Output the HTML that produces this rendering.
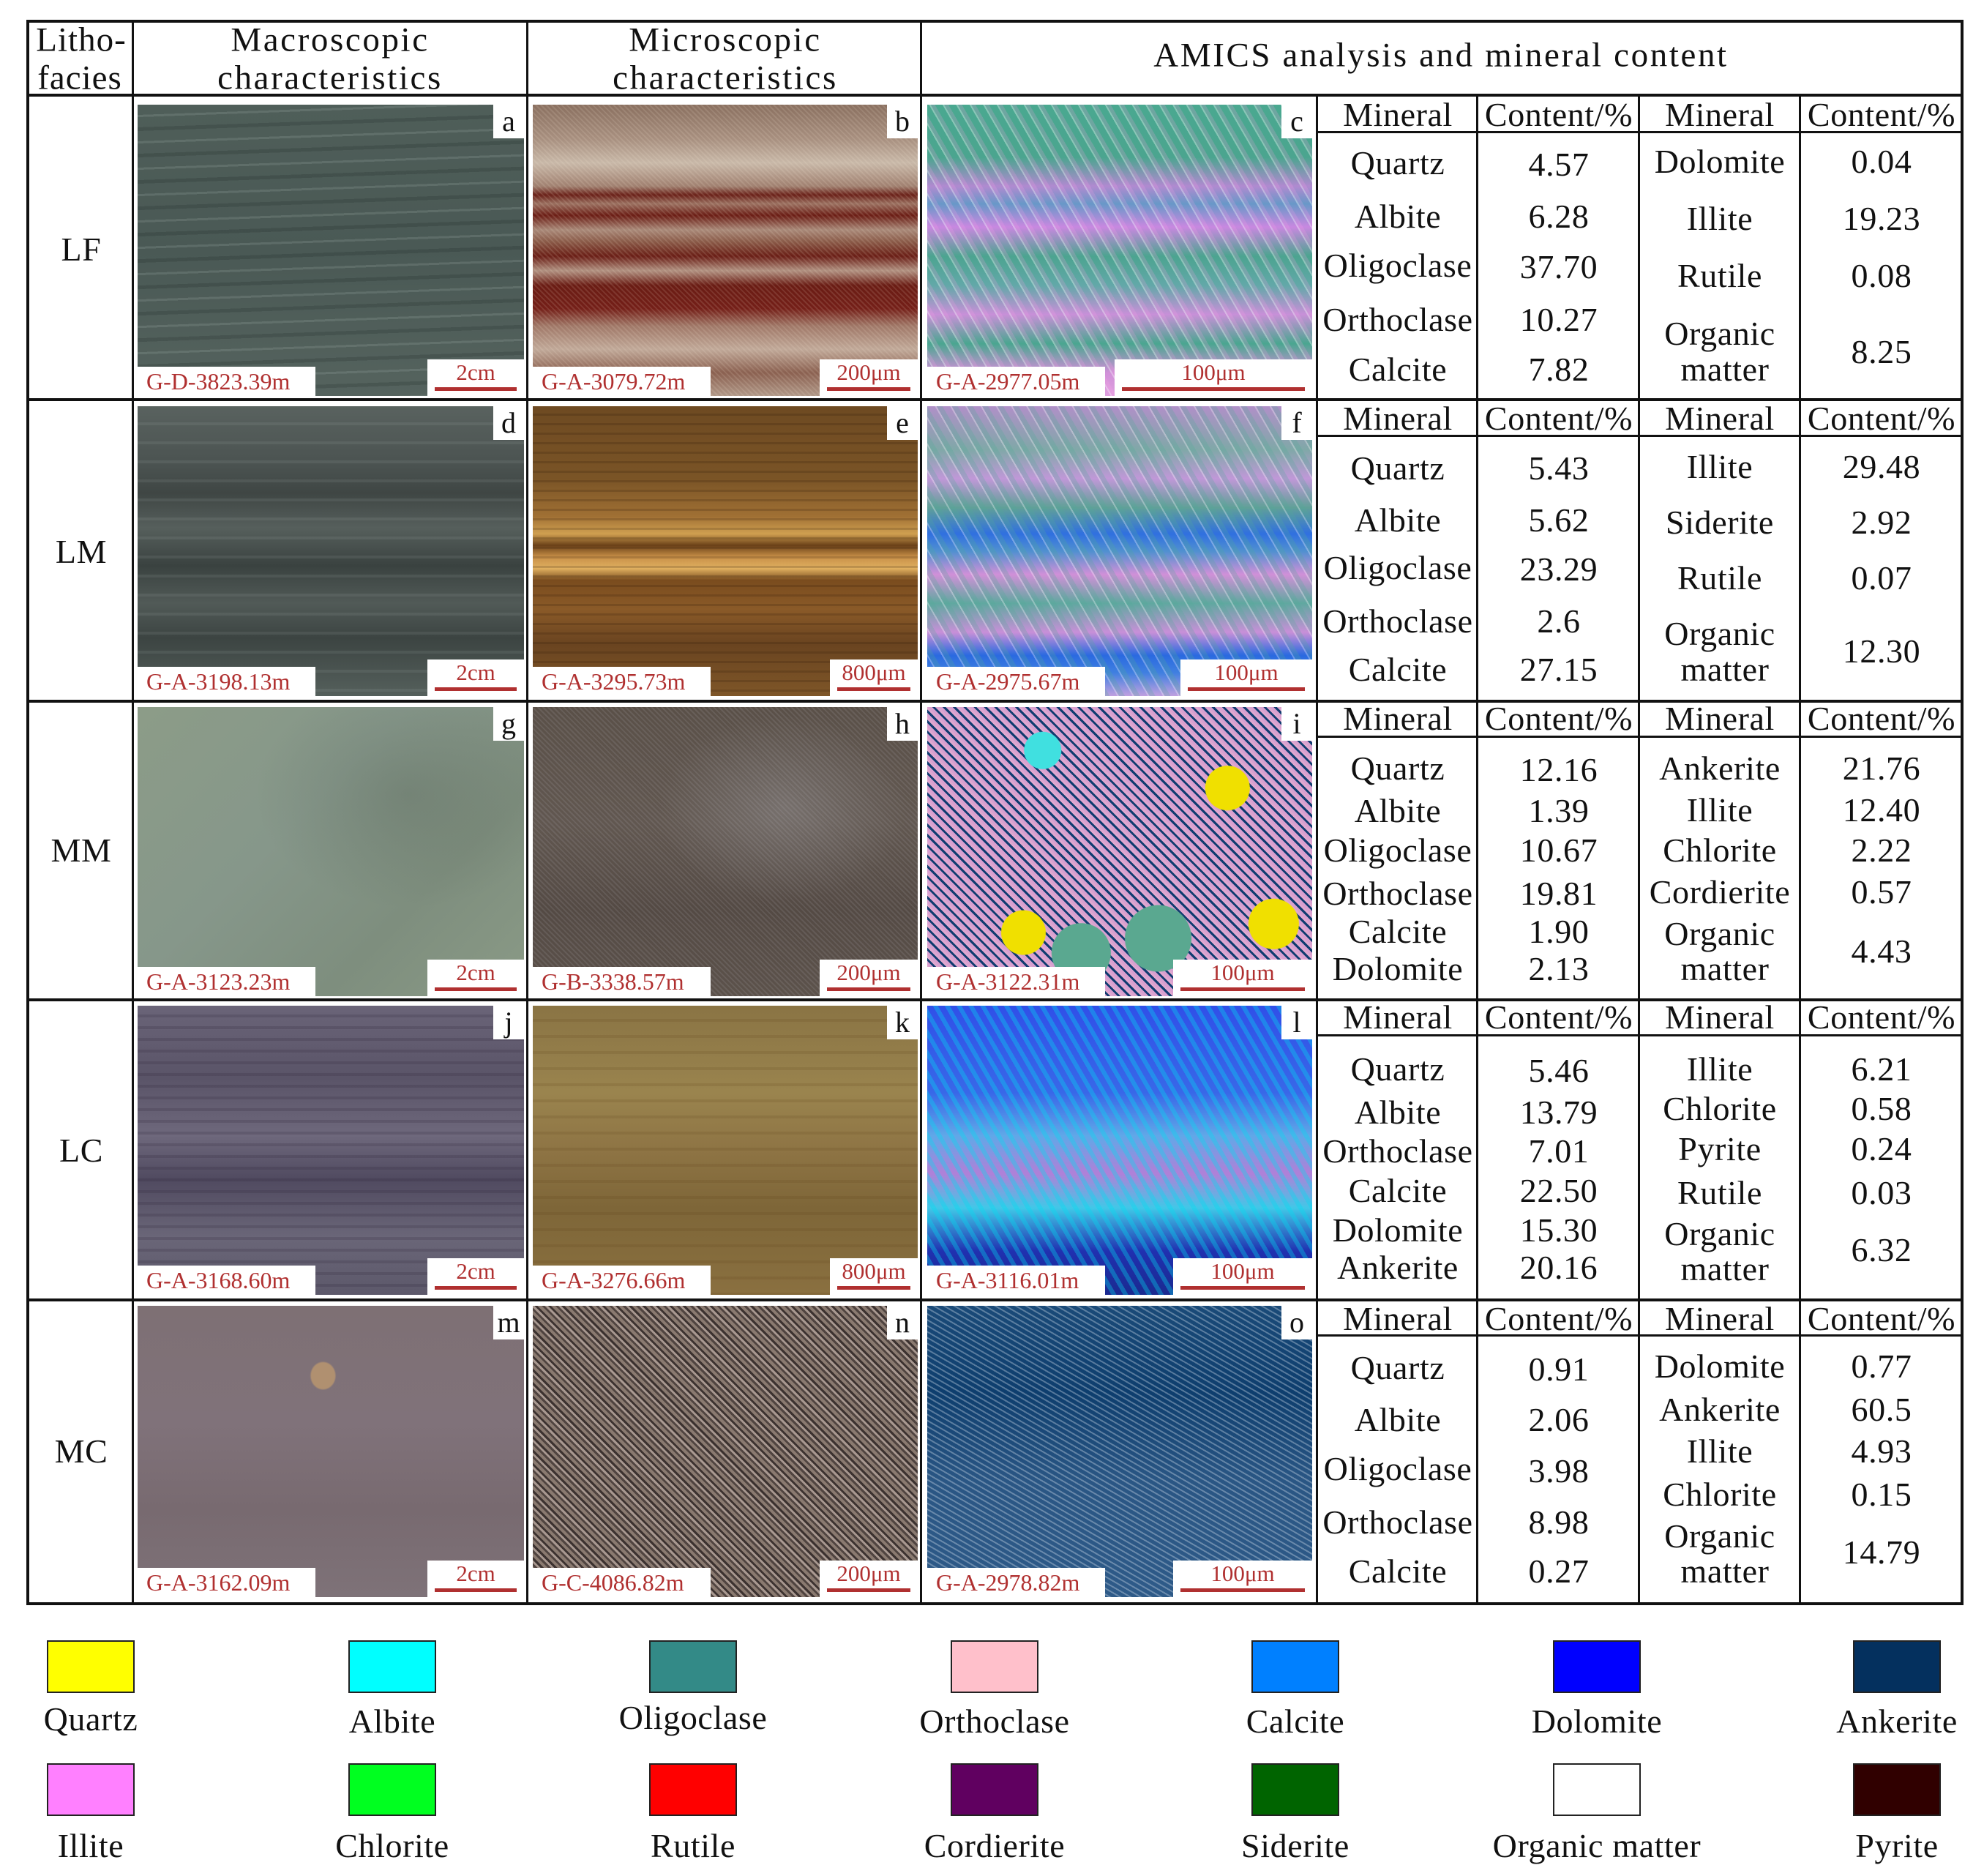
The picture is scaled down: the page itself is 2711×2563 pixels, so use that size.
<!DOCTYPE html>
<html><head><meta charset="utf-8">
<style>
body{margin:0;background:#fff;}
#p{position:relative;width:2711px;height:2563px;background:#fff;overflow:hidden;font-family:"Liberation Serif",serif;color:#111;}
.h,.v{position:absolute;background:#111;}
.t{position:absolute;transform:translate(-50%,-50%);white-space:nowrap;font-size:46px;line-height:1;letter-spacing:0.6px;}
.hd{font-size:47px;letter-spacing:2.6px;}
.im{position:absolute;overflow:hidden;}
.lab{position:absolute;background:#fff;color:#b03030;font-size:32px;line-height:40px;padding:0 0 0 12px;bottom:0;left:0;height:40px;box-sizing:border-box;white-space:nowrap;width:243px;}
.sc{position:absolute;background:#fff;color:#b03030;font-size:31px;line-height:36px;text-align:center;bottom:0;right:0;height:50px;white-space:nowrap;}
.sc i{position:absolute;left:10px;right:10px;bottom:7px;height:5px;background:#b03030;}
.let{position:absolute;top:0;right:0;width:42px;height:46px;background:#fff;font-size:40px;line-height:46px;text-align:center;}
.sw{position:absolute;width:120px;height:72px;border:2px solid #222;box-sizing:border-box;}
</style></head><body><div id="p">

<div class="h" style="left:38px;top:27px;width:2645px;height:4px"></div>
<div class="h" style="left:38px;top:128px;width:2645px;height:4px"></div>
<div class="h" style="left:38px;top:544px;width:2645px;height:4px"></div>
<div class="h" style="left:38px;top:956px;width:2645px;height:4px"></div>
<div class="h" style="left:38px;top:1364px;width:2645px;height:4px"></div>
<div class="h" style="left:38px;top:1774px;width:2645px;height:4px"></div>
<div class="h" style="left:38px;top:2189px;width:2645px;height:4px"></div>
<div class="h" style="left:1800px;top:179px;width:881px;height:3px"></div>
<div class="h" style="left:1800px;top:594px;width:881px;height:3px"></div>
<div class="h" style="left:1800px;top:1005px;width:881px;height:3px"></div>
<div class="h" style="left:1800px;top:1413px;width:881px;height:3px"></div>
<div class="h" style="left:1800px;top:1823px;width:881px;height:3px"></div>
<div class="v" style="left:36px;top:27px;width:4px;height:2166px"></div>
<div class="v" style="left:180px;top:27px;width:3px;height:2166px"></div>
<div class="v" style="left:719px;top:27px;width:3px;height:2166px"></div>
<div class="v" style="left:1257px;top:27px;width:3px;height:2166px"></div>
<div class="v" style="left:2679px;top:27px;width:4px;height:2166px"></div>
<div class="v" style="left:1798px;top:130px;width:3px;height:2063px"></div>
<div class="v" style="left:2017px;top:130px;width:3px;height:2063px"></div>
<div class="v" style="left:2238px;top:130px;width:3px;height:2063px"></div>
<div class="v" style="left:2458px;top:130px;width:3px;height:2063px"></div>

<div class="t hd" style="left:111px;top:55px;letter-spacing:1px">Litho-</div>
<div class="t hd" style="left:109px;top:107px;letter-spacing:1px">facies</div>
<div class="t hd" style="left:451px;top:55px">Macroscopic</div>
<div class="t hd" style="left:451px;top:107px">characteristics</div>
<div class="t hd" style="left:991px;top:55px">Microscopic</div>
<div class="t hd" style="left:991px;top:107px">characteristics</div>
<div class="t hd" style="left:1969px;top:76px">AMICS analysis and mineral content</div>

<div class="t" style="left:111px;top:341px">LF</div>
<div class="t" style="left:111px;top:754px">LM</div>
<div class="t" style="left:111px;top:1162px">MM</div>
<div class="t" style="left:111px;top:1572px">LC</div>
<div class="t" style="left:111px;top:1983px">MC</div>

<!-- Row 1 images -->
<div class="im" style="left:188px;top:143px;width:528px;height:398px;background:repeating-linear-gradient(178deg,rgba(0,0,0,0) 0 14px,rgba(190,205,200,.16) 14px 17px,rgba(0,0,0,0) 17px 31px,rgba(20,30,28,.18) 31px 36px),linear-gradient(180deg,#4f5e59,#4a5955 50%,#55635e);">
<div class="let">a</div><div class="lab">G-D-3823.39m</div><div class="sc" style="width:132px">2cm<i></i></div></div>
<div class="im" style="left:728px;top:143px;width:526px;height:398px;background:repeating-linear-gradient(45deg,rgba(255,255,255,0) 0 3px,rgba(255,240,220,.12) 3px 5px),linear-gradient(180deg,#8a7060 0,#a89080 12%,#c8b8a8 20%,#a08070 28%,#6a2018 31%,#9a7060 34%,#6b1d15 38%,#a88878 43%,#8a5a48 47%,#6a1e16 52%,#b09080 57%,#6a1c14 62%,#741f18 70%,#a07868 76%,#c0a898 84%,#8a6050 92%,#b09888 100%);">
<div class="let">b</div><div class="lab">G-A-3079.72m</div><div class="sc" style="width:134px">200μm<i></i></div></div>
<div class="im" style="left:1267px;top:143px;width:526px;height:398px;background:repeating-linear-gradient(60deg,rgba(255,255,255,0) 0 9px,rgba(255,255,255,.35) 9px 11px,rgba(255,160,230,.2) 11px 16px),linear-gradient(180deg,#4aa890 0,#4ba58f 18%,#b08ad0 28%,#6898c8 34%,#c888e0 42%,#4ca490 52%,#62a8a8 62%,#c890d8 72%,#4aa690 82%,#d090d8 92%,#e0a0e0 100%);">
<div class="let">c</div><div class="lab">G-A-2977.05m</div><div class="sc" style="width:270px">100μm<i></i></div></div>

<!-- Row 2 images -->
<div class="im" style="left:188px;top:555px;width:528px;height:396px;background:repeating-linear-gradient(180deg,rgba(0,0,0,0) 0 22px,rgba(170,180,178,.12) 22px 26px),linear-gradient(180deg,#59625f 0,#4b5351 20%,#3f4644 30%,#565f5c 42%,#3a4240 55%,#515a57 68%,#3c4442 80%,#55605c 100%);">
<div class="let">d</div><div class="lab">G-A-3198.13m</div><div class="sc" style="width:132px">2cm<i></i></div></div>
<div class="im" style="left:728px;top:555px;width:526px;height:396px;background:repeating-linear-gradient(180deg,rgba(0,0,0,0) 0 10px,rgba(40,20,5,.18) 10px 13px),linear-gradient(180deg,#6e4a22 0,#7a5426 25%,#a07034 38%,#d0a050 44%,#6a4018 48%,#c89048 52%,#e0b060 56%,#7a4c1e 60%,#8a5a28 70%,#6a4420 82%,#7e5628 100%);">
<div class="let">e</div><div class="lab">G-A-3295.73m</div><div class="sc" style="width:120px">800μm<i></i></div></div>
<div class="im" style="left:1267px;top:555px;width:526px;height:396px;background:repeating-linear-gradient(60deg,rgba(255,255,255,0) 0 9px,rgba(255,255,255,.3) 9px 11px,rgba(80,170,150,.25) 11px 18px),linear-gradient(180deg,#b090c8 0,#80a8a8 15%,#c098d8 25%,#60a098 35%,#3070e0 44%,#5090d0 50%,#d090d8 58%,#60a8a0 68%,#c890d8 78%,#2a6ae0 86%,#4080e0 92%,#c0a0e0 100%);">
<div class="let">f</div><div class="lab">G-A-2975.67m</div><div class="sc" style="width:180px">100μm<i></i></div></div>

<!-- Row 3 images -->
<div class="im" style="left:188px;top:966px;width:528px;height:395px;background:radial-gradient(ellipse at 70% 30%,rgba(60,70,60,.2),rgba(0,0,0,0) 40%),linear-gradient(135deg,#8c9c88,#86978a 40%,#7e8e7e 70%,#8a9a86);">
<div class="let">g</div><div class="lab">G-A-3123.23m</div><div class="sc" style="width:132px">2cm<i></i></div></div>
<div class="im" style="left:728px;top:966px;width:526px;height:395px;background:repeating-linear-gradient(45deg,rgba(255,255,255,0) 0 3px,rgba(200,200,210,.12) 3px 5px),radial-gradient(ellipse at 65% 35%,rgba(170,170,175,.3),rgba(0,0,0,0) 35%),linear-gradient(180deg,#5a5048,#615750 40%,#544a44 70%,#5c524b);">
<div class="let">h</div><div class="lab">G-B-3338.57m</div><div class="sc" style="width:134px">200μm<i></i></div></div>
<div class="im" style="left:1267px;top:966px;width:526px;height:395px;background:radial-gradient(circle at 78% 28%,#f0e000 0 30px,rgba(0,0,0,0) 31px),radial-gradient(circle at 90% 75%,#f0e000 0 34px,rgba(0,0,0,0) 35px),radial-gradient(circle at 25% 78%,#f0e000 0 30px,rgba(0,0,0,0) 31px),radial-gradient(circle at 40% 85%,#5aa890 0 40px,rgba(0,0,0,0) 41px),radial-gradient(circle at 60% 80%,#5aa890 0 45px,rgba(0,0,0,0) 46px),radial-gradient(circle at 30% 15%,#40e0e0 0 25px,rgba(0,0,0,0) 26px),repeating-linear-gradient(45deg,#d8a0d0 0 4px,#103c70 4px 7px,#e0a8d0 7px 10px);">
<div class="let">i</div><div class="lab">G-A-3122.31m</div><div class="sc" style="width:190px">100μm<i></i></div></div>

<!-- Row 4 images -->
<div class="im" style="left:188px;top:1374px;width:528px;height:395px;background:repeating-linear-gradient(180deg,rgba(0,0,0,0) 0 12px,rgba(40,30,50,.18) 12px 16px),linear-gradient(180deg,#6a6478 0,#5a5468 25%,#6e687c 45%,#504a60 60%,#6a6678 80%,#5c586a 100%);">
<div class="let">j</div><div class="lab">G-A-3168.60m</div><div class="sc" style="width:132px">2cm<i></i></div></div>
<div class="im" style="left:728px;top:1374px;width:526px;height:395px;background:repeating-linear-gradient(180deg,rgba(0,0,0,0) 0 18px,rgba(90,60,20,.15) 18px 22px),linear-gradient(180deg,#8a7444 0,#9a844e 30%,#8e7444 50%,#7e6638 70%,#8a7040 100%);">
<div class="let">k</div><div class="lab">G-A-3276.66m</div><div class="sc" style="width:120px">800μm<i></i></div></div>
<div class="im" style="left:1267px;top:1374px;width:526px;height:395px;background:repeating-linear-gradient(60deg,rgba(255,255,255,0) 0 8px,rgba(0,220,240,.35) 8px 14px),linear-gradient(180deg,#3050e8 0,#3868e8 30%,#60a8e8 45%,#b080d8 58%,#40c8e8 70%,#2030b0 85%,#1a2a90 100%);">
<div class="let">l</div><div class="lab">G-A-3116.01m</div><div class="sc" style="width:190px">100μm<i></i></div></div>

<!-- Row 5 images -->
<div class="im" style="left:188px;top:1784px;width:528px;height:398px;background:radial-gradient(ellipse at 48% 24%,#b09070 0 16px,rgba(0,0,0,0) 18px),linear-gradient(180deg,#7e7074,#80727a 40%,#786a70 70%,#7e7278);">
<div class="let">m</div><div class="lab">G-A-3162.09m</div><div class="sc" style="width:132px">2cm<i></i></div></div>
<div class="im" style="left:728px;top:1784px;width:526px;height:398px;background:repeating-linear-gradient(45deg,#8a7a70 0 4px,#504440 4px 7px,#a89890 7px 10px,#3c3230 10px 13px);">
<div class="let">n</div><div class="lab">G-C-4086.82m</div><div class="sc" style="width:134px">200μm<i></i></div></div>
<div class="im" style="left:1267px;top:1784px;width:526px;height:398px;background:repeating-linear-gradient(30deg,rgba(255,255,255,0) 0 5px,rgba(220,230,240,.35) 5px 7px),linear-gradient(180deg,#1a4a78 0,#0e3e6e 30%,#2a5684 60%,#2e5a88 100%);">
<div class="let">o</div><div class="lab">G-A-2978.82m</div><div class="sc" style="width:190px">100μm<i></i></div></div>

<!-- row1 -->
<div class="t" style="left:1910px;top:157px">Mineral</div><div class="t" style="left:2130px;top:157px">Content/%</div><div class="t" style="left:2350px;top:157px">Mineral</div><div class="t" style="left:2571px;top:157px">Content/%</div>
<div class="t" style="left:1910px;top:223px">Quartz</div><div class="t" style="left:2130px;top:225px">4.57</div><div class="t" style="left:2350px;top:221px">Dolomite</div><div class="t" style="left:2571px;top:221px">0.04</div>
<div class="t" style="left:1910px;top:296px">Albite</div><div class="t" style="left:2130px;top:296px">6.28</div><div class="t" style="left:2350px;top:299px">Illite</div><div class="t" style="left:2571px;top:299px">19.23</div>
<div class="t" style="left:1910px;top:363px">Oligoclase</div><div class="t" style="left:2130px;top:365px">37.70</div><div class="t" style="left:2350px;top:377px">Rutile</div><div class="t" style="left:2571px;top:377px">0.08</div>
<div class="t" style="left:1910px;top:437px">Orthoclase</div><div class="t" style="left:2130px;top:437px">10.27</div><div class="t" style="left:2350px;top:456px">Organic</div><div class="t" style="left:2571px;top:481px">8.25</div>
<div class="t" style="left:1910px;top:505px">Calcite</div><div class="t" style="left:2130px;top:505px">7.82</div><div class="t" style="left:2357px;top:505px">matter</div>
<!-- row2 -->
<div class="t" style="left:1910px;top:572px">Mineral</div><div class="t" style="left:2130px;top:572px">Content/%</div><div class="t" style="left:2350px;top:572px">Mineral</div><div class="t" style="left:2571px;top:572px">Content/%</div>
<div class="t" style="left:1910px;top:640px">Quartz</div><div class="t" style="left:2130px;top:640px">5.43</div><div class="t" style="left:2350px;top:638px">Illite</div><div class="t" style="left:2571px;top:638px">29.48</div>
<div class="t" style="left:1910px;top:711px">Albite</div><div class="t" style="left:2130px;top:711px">5.62</div><div class="t" style="left:2350px;top:714px">Siderite</div><div class="t" style="left:2571px;top:714px">2.92</div>
<div class="t" style="left:1910px;top:776px">Oligoclase</div><div class="t" style="left:2130px;top:778px">23.29</div><div class="t" style="left:2350px;top:790px">Rutile</div><div class="t" style="left:2571px;top:790px">0.07</div>
<div class="t" style="left:1910px;top:849px">Orthoclase</div><div class="t" style="left:2130px;top:849px">2.6</div><div class="t" style="left:2350px;top:866px">Organic</div><div class="t" style="left:2571px;top:890px">12.30</div>
<div class="t" style="left:1910px;top:915px">Calcite</div><div class="t" style="left:2130px;top:915px">27.15</div><div class="t" style="left:2357px;top:915px">matter</div>
<!-- row3 -->
<div class="t" style="left:1910px;top:982px">Mineral</div><div class="t" style="left:2130px;top:982px">Content/%</div><div class="t" style="left:2350px;top:982px">Mineral</div><div class="t" style="left:2571px;top:982px">Content/%</div>
<div class="t" style="left:1910px;top:1050px">Quartz</div><div class="t" style="left:2130px;top:1052px">12.16</div><div class="t" style="left:2350px;top:1050px">Ankerite</div><div class="t" style="left:2571px;top:1050px">21.76</div>
<div class="t" style="left:1910px;top:1108px">Albite</div><div class="t" style="left:2130px;top:1108px">1.39</div><div class="t" style="left:2350px;top:1107px">Illite</div><div class="t" style="left:2571px;top:1107px">12.40</div>
<div class="t" style="left:1910px;top:1162px">Oligoclase</div><div class="t" style="left:2130px;top:1162px">10.67</div><div class="t" style="left:2350px;top:1162px">Chlorite</div><div class="t" style="left:2571px;top:1162px">2.22</div>
<div class="t" style="left:1910px;top:1221px">Orthoclase</div><div class="t" style="left:2130px;top:1221px">19.81</div><div class="t" style="left:2350px;top:1219px">Cordierite</div><div class="t" style="left:2571px;top:1219px">0.57</div>
<div class="t" style="left:1910px;top:1273px">Calcite</div><div class="t" style="left:2130px;top:1273px">1.90</div><div class="t" style="left:2350px;top:1276px">Organic</div><div class="t" style="left:2571px;top:1300px">4.43</div>
<div class="t" style="left:1910px;top:1324px">Dolomite</div><div class="t" style="left:2130px;top:1324px">2.13</div><div class="t" style="left:2357px;top:1324px">matter</div>
<!-- row4 -->
<div class="t" style="left:1910px;top:1390px">Mineral</div><div class="t" style="left:2130px;top:1390px">Content/%</div><div class="t" style="left:2350px;top:1390px">Mineral</div><div class="t" style="left:2571px;top:1390px">Content/%</div>
<div class="t" style="left:1910px;top:1461px">Quartz</div><div class="t" style="left:2130px;top:1463px">5.46</div><div class="t" style="left:2350px;top:1461px">Illite</div><div class="t" style="left:2571px;top:1461px">6.21</div>
<div class="t" style="left:1910px;top:1520px">Albite</div><div class="t" style="left:2130px;top:1520px">13.79</div><div class="t" style="left:2350px;top:1515px">Chlorite</div><div class="t" style="left:2571px;top:1515px">0.58</div>
<div class="t" style="left:1910px;top:1573px">Orthoclase</div><div class="t" style="left:2130px;top:1573px">7.01</div><div class="t" style="left:2350px;top:1570px">Pyrite</div><div class="t" style="left:2571px;top:1570px">0.24</div>
<div class="t" style="left:1910px;top:1627px">Calcite</div><div class="t" style="left:2130px;top:1627px">22.50</div><div class="t" style="left:2350px;top:1630px">Rutile</div><div class="t" style="left:2571px;top:1630px">0.03</div>
<div class="t" style="left:1910px;top:1681px">Dolomite</div><div class="t" style="left:2130px;top:1681px">15.30</div><div class="t" style="left:2350px;top:1686px">Organic</div><div class="t" style="left:2571px;top:1708px">6.32</div>
<div class="t" style="left:1910px;top:1732px">Ankerite</div><div class="t" style="left:2130px;top:1732px">20.16</div><div class="t" style="left:2357px;top:1734px">matter</div>
<!-- row5 -->
<div class="t" style="left:1910px;top:1802px">Mineral</div><div class="t" style="left:2130px;top:1802px">Content/%</div><div class="t" style="left:2350px;top:1802px">Mineral</div><div class="t" style="left:2571px;top:1802px">Content/%</div>
<div class="t" style="left:1910px;top:1869px">Quartz</div><div class="t" style="left:2130px;top:1871px">0.91</div><div class="t" style="left:2350px;top:1867px">Dolomite</div><div class="t" style="left:2571px;top:1867px">0.77</div>
<div class="t" style="left:1910px;top:1940px">Albite</div><div class="t" style="left:2130px;top:1940px">2.06</div><div class="t" style="left:2350px;top:1926px">Ankerite</div><div class="t" style="left:2571px;top:1926px">60.5</div>
<div class="t" style="left:1910px;top:2007px">Oligoclase</div><div class="t" style="left:2130px;top:2010px">3.98</div><div class="t" style="left:2350px;top:1983px">Illite</div><div class="t" style="left:2571px;top:1983px">4.93</div>
<div class="t" style="left:1910px;top:2080px">Orthoclase</div><div class="t" style="left:2130px;top:2080px">8.98</div><div class="t" style="left:2350px;top:2042px">Chlorite</div><div class="t" style="left:2571px;top:2042px">0.15</div>
<div class="t" style="left:1910px;top:2147px">Calcite</div><div class="t" style="left:2130px;top:2147px">0.27</div><div class="t" style="left:2350px;top:2099px">Organic</div><div class="t" style="left:2571px;top:2121px">14.79</div>
<div class="t" style="left:2357px;top:2147px">matter</div>

<!-- Legend -->
<div class="sw" style="left:64px;top:2241px;background:#ffff00"></div>
<div class="sw" style="left:476px;top:2241px;background:#00ffff"></div>
<div class="sw" style="left:887px;top:2241px;background:#338a87"></div>
<div class="sw" style="left:1299px;top:2241px;background:#ffc0cb"></div>
<div class="sw" style="left:1710px;top:2241px;background:#0080ff"></div>
<div class="sw" style="left:2122px;top:2241px;background:#0000ff"></div>
<div class="sw" style="left:2532px;top:2241px;background:#04305e"></div>
<div class="t" style="left:124px;top:2349px">Quartz</div>
<div class="t" style="left:536px;top:2352px">Albite</div>
<div class="t" style="left:947px;top:2347px">Oligoclase</div>
<div class="t" style="left:1359px;top:2352px">Orthoclase</div>
<div class="t" style="left:1770px;top:2352px">Calcite</div>
<div class="t" style="left:2182px;top:2352px">Dolomite</div>
<div class="t" style="left:2592px;top:2352px">Ankerite</div>

<div class="sw" style="left:64px;top:2409px;background:#ff80ff"></div>
<div class="sw" style="left:476px;top:2409px;background:#00ff20"></div>
<div class="sw" style="left:887px;top:2409px;background:#ff0000"></div>
<div class="sw" style="left:1299px;top:2409px;background:#600060"></div>
<div class="sw" style="left:1710px;top:2409px;background:#006400"></div>
<div class="sw" style="left:2122px;top:2409px;background:#ffffff"></div>
<div class="sw" style="left:2532px;top:2409px;background:#300000"></div>
<div class="t" style="left:124px;top:2522px">Illite</div>
<div class="t" style="left:536px;top:2522px">Chlorite</div>
<div class="t" style="left:947px;top:2522px">Rutile</div>
<div class="t" style="left:1359px;top:2522px">Cordierite</div>
<div class="t" style="left:1770px;top:2522px">Siderite</div>
<div class="t" style="left:2182px;top:2522px">Organic matter</div>
<div class="t" style="left:2592px;top:2522px">Pyrite</div>

</div></body></html>
